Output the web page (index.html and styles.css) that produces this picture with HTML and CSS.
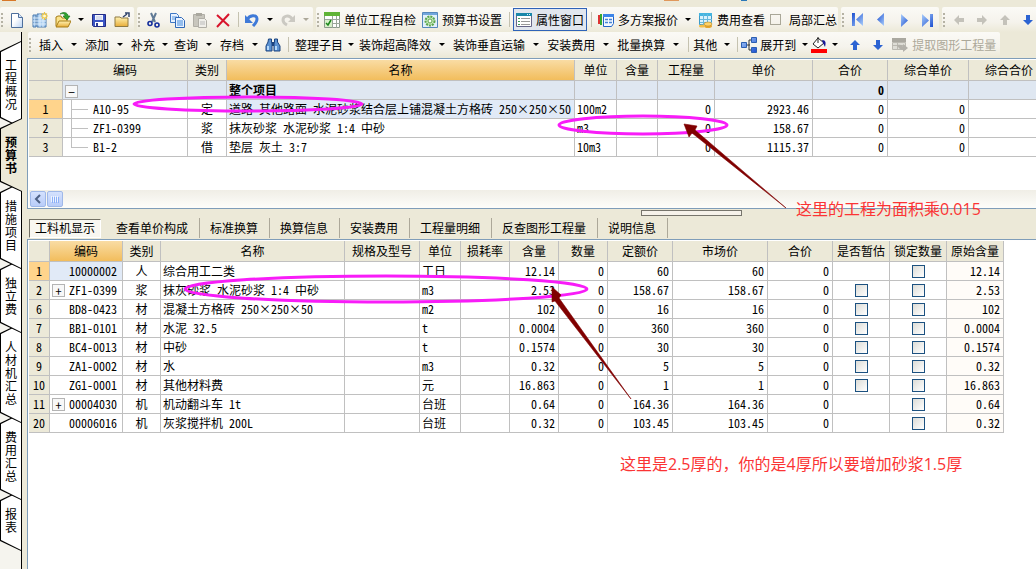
FILE: index.html
```html
<!DOCTYPE html>
<html lang="zh-CN">
<head>
<meta charset="utf-8">
<title>预算书</title>
<link rel="stylesheet" href="styles.css">
</head>
<body>
<svg class="defs" aria-hidden="true">
<defs>
<linearGradient id="blue" x1="0" y1="0" x2="1" y2="1"><stop offset="0" stop-color="#a9cdfb"/><stop offset="1" stop-color="#1c4fd0"/></linearGradient>
<linearGradient id="paper" x1="0" y1="0" x2="1" y2="1"><stop offset="0.4" stop-color="#fff"/><stop offset="1" stop-color="#b9d2f2"/></linearGradient>
<linearGradient id="gold" x1="0" y1="0" x2="0" y2="1"><stop offset="0" stop-color="#fff3b4"/><stop offset="1" stop-color="#e8ad38"/></linearGradient>
<symbol id="up" viewBox="0 0 16 16"><path d="M8 3l5 5h-3v5H6V8H3z"/></symbol>
<symbol id="next" viewBox="0 0 16 16"><path d="M5 2l7 6.500-7 6.500z"/></symbol>
<symbol id="last" viewBox="0 0 16 16"><path d="M3 2l7 6.500-7 6.500zM11 2h3v13h-3z"/></symbol>
</defs>
</svg>
<div class="app">
<div class="strip"></div>
<div class="toolbar">
  <div class="band">
    <i class="grip"></i>
    <button class="tool icon" aria-label="新建"><svg viewBox="0 0 16 16"><path d="M2.500 1.500h7l4 4v10h-11z" fill="url(#paper)" stroke="#4d6f9c"/><path d="M9.500 1.500v4h4" fill="#dbe8fa" stroke="#4d6f9c"/></svg></button>
    <button class="tool icon" aria-label="新建项目"><svg viewBox="0 0 16 16"><path d="M1 3h3v12H1zM5 2h9v13H5z" fill="#a9cdf0" stroke="#4a7ab0"/><path d="M1 6h13M1 9h13M1 12h13M8 2v13M11 2v13" stroke="#dcecfb"/><path d="M12.500 0v8M9 4h7M10 1.500l5 5M15 1.500l-5 5" stroke="#f5c637" stroke-width="1.200"/><circle cx="12.500" cy="4" r="1.500" fill="#fffbd0"/></svg></button>
    <button class="tool icon" aria-label="打开"><svg viewBox="0 0 16 16"><path d="M1 14V5l2-1h3l1 2h5v3" fill="#fbe38b" stroke="#a67c16"/><path d="M1 15l3-6h12l-3 6z" fill="url(#gold)" stroke="#a67c16"/><path d="M5 2c4-3 8-1 8 2h2l-3 4-4-4h2c0-2-2-3-5-2z" fill="#2fa32f" stroke="#126b16" stroke-width=".6"/></svg></button>
    <button class="drop" aria-label="打开选项"></button>
    <button class="tool icon" aria-label="保存"><svg viewBox="0 0 16 16"><path d="M1.500 2.500h13v12h-12l-1-1z" fill="#3b55c4" stroke="#232c86"/><path d="M4 3h8v5H4z" fill="#f3f5fc"/><path d="M5 5h6M5 7h6" stroke="#aab4d4" stroke-width=".7"/><path d="M4 10h8v4H4z" fill="#fff"/><path d="M5 11h2v3H5z" fill="#2b3a95"/></svg></button>
    <button class="tool icon" aria-label="关闭"><svg viewBox="0 0 16 16"><path d="M1 5h5l1 1h7v8.500H1z" fill="url(#gold)" stroke="#8f7a42"/><path d="M9 5l4-3M11 1h4v4" fill="none" stroke="#31456d" stroke-width="1.500"/></svg></button>
  </div>
  <div class="band">
    <i class="grip"></i>
    <button class="tool icon" aria-label="剪切"><svg viewBox="0 0 16 16"><path d="M5 1l4 9M10 1L6 10" stroke="#617b96" stroke-width="2"/><circle cx="4" cy="11.500" r="2" fill="none" stroke="#142e9c" stroke-width="1.600"/><circle cx="11" cy="13" r="2" fill="none" stroke="#142e9c" stroke-width="1.600"/></svg></button>
    <button class="tool icon" aria-label="复制"><svg viewBox="0 0 16 16"><path d="M1.500 1.500h6l2 2v7h-8z" fill="#e8f2ff" stroke="#3f78c4"/><path d="M3 5h5M3 7h5" stroke="#5a98de"/><path d="M6.500 5.500h6l3 3v7h-9z" fill="#eaf3ff" stroke="#2f68b8"/><path d="M8 9h6M8 11h6M8 13h6" stroke="#3f88dc"/></svg></button>
    <button class="tool icon" aria-label="粘贴" disabled><svg viewBox="0 0 16 16"><path d="M1.500 2.500h11v12h-11z" fill="#c8c6bd" stroke="#b0aea6"/><path d="M4 1h6v3H4z" fill="#aaa89f"/><path d="M6.500 6.500h6l2 2v7h-8z" fill="#f0efea" stroke="#b0aea6"/><path d="M8 10h5M8 12h5" stroke="#bbb"/></svg></button>
    <button class="tool icon" aria-label="删除"><svg viewBox="0 0 16 16"><path d="M2 3l12 11M14 2L2 15" stroke="#d8142c" stroke-width="2"/></svg></button>
    <i class="sep slim"></i>
    <button class="tool icon" aria-label="撤销"><svg viewBox="0 0 16 16"><path d="M3 8c2-5 10-6 10-1 0 3-2 5-4 7" fill="none" stroke="#3f7ad8" stroke-width="3"/><path d="M1 3v8h8z" fill="#3f7ad8"/></svg></button>
    <button class="drop" aria-label="撤销选项"></button>
    <button class="tool icon" aria-label="重做" disabled><svg viewBox="0 0 16 16"><path d="M12 7C9 2 3 4 3 8c0 3 2 4 4 5" fill="none" stroke="#cbc9c2" stroke-width="3"/><path d="M15 3v7H8z" fill="#cbc9c2"/></svg></button>
    <button class="drop" aria-label="重做选项" disabled></button>
  </div>
  <div class="band">
    <i class="grip"></i>
    <button class="tool"><svg viewBox="0 0 16 16"><path d="M.5.500h15v15H.5z" fill="#fff" stroke="#8b9a8b"/><path d="M0 0h16v4H0z" fill="#5fb336"/><path d="M1 7.500h15M1 11.500h15M8.500 4v12M12.500 4v12" stroke="#9aa79a"/><path d="M1 8h7v7H1z" fill="#d7f1c9"/><path d="M2 11l2 2 3-5" fill="none" stroke="#1b861b" stroke-width="1.500"/></svg>单位工程自检</button>
    <button class="tool"><svg viewBox="0 0 16 16"><path d="M.5.500h15v15H.5z" fill="#e2f0fb" stroke="#5587bb"/><path d="M1 1h14v2H1z" fill="#72a6dc"/><circle cx="8" cy="9" r="4.500" fill="#c7e7bc" stroke="#5aa64a" stroke-width="2" stroke-dasharray="2 1"/><circle cx="8" cy="9" r="2" fill="#fff" stroke="#5aa64a"/></svg>预算书设置</button>
    <i class="sep"></i>
    <button class="tool pressed" aria-pressed="true"><svg viewBox="0 0 16 16"><path d="M.5 1.500h15v13H.5z" fill="#fff" stroke="#668"/><path d="M0 1h16v3H0z" fill="#1987a9"/><path d="M11 2.500h4" stroke="#d9f4fb" stroke-dasharray="1 1"/><path d="M2 6.500h2M2 9.500h2M2 12.500h2" stroke="#3f9d58"/><path d="M5 6.500h9M5 9.500h9M5 12.500h9" stroke="#999"/></svg>属性窗口</button>
    <i class="sep"></i>
    <button class="tool"><svg viewBox="0 0 16 16"><path d="M1 3v9" stroke="#d33" stroke-width="2"/><path d="M3 2v11" stroke="#3a3" stroke-width="2"/><path d="M5.500 2.500h10v9l-2 3h-8z" fill="#f4f9ff" stroke="#2364c8"/><path d="M5 2h11v3H5z" fill="#3c85e8"/><path d="M7 7.500h3M11 7.500h3M7 10.500h3M11 10.500h3" stroke="#4684d6" stroke-width="1.500"/></svg>多方案报价</button>
    <button class="drop" aria-label="多方案报价选项"></button>
    <button class="tool"><svg viewBox="0 0 16 16"><path d="M2.500 1.500h12v11h-12z" fill="#d9f1fc" stroke="#3d9bc8"/><path d="M2 1h13v3H2z" fill="#45b5e0"/><path d="M3 7.500h12M3 10.500h12M6.500 2v11M10.500 2v11" stroke="#67b8dc"/><ellipse cx="11" cy="14" rx="4" ry="2" fill="#e6a72e"/><ellipse cx="11" cy="12" rx="4" ry="2" fill="#ffd369" stroke="#b37b17" stroke-width=".5"/><ellipse cx="5" cy="14" rx="3" ry="1.500" fill="#f2bd49"/></svg>费用查看</button>
    <label class="toggle"><input type="checkbox">局部汇总</label>
  </div>
  <div class="band">
    <i class="grip"></i>
    <button class="tool icon" aria-label="首条"><svg class="flip nav" viewBox="0 0 16 16"><use href="#last"/></svg></button>
    <button class="tool icon" aria-label="上一条"><svg class="flip nav" viewBox="0 0 16 16"><use href="#next"/></svg></button>
    <button class="tool icon" aria-label="下一条"><svg class="nav" viewBox="0 0 16 16"><use href="#next"/></svg></button>
    <button class="tool icon" aria-label="末条"><svg class="nav" viewBox="0 0 16 16"><use href="#last"/></svg></button>
  </div>
  <div class="band wide">
    <i class="grip"></i>
    <button class="tool icon" aria-label="左移" disabled><svg class="left" viewBox="0 0 16 16"><use href="#up"/></svg></button>
    <button class="tool icon" aria-label="右移" disabled><svg class="right" viewBox="0 0 16 16"><use href="#up"/></svg></button>
    <button class="tool icon" aria-label="上移" disabled><svg viewBox="0 0 16 16"><use href="#up"/></svg></button>
    <button class="tool icon" aria-label="下移"><svg class="down move" viewBox="0 0 16 16"><use href="#up"/></svg></button>
  </div>
</div>
<div class="body">
<nav class="rail">
  <button class="side"><span>工程概况</span></button>
  <button class="side current"><span>预算书</span></button>
  <button class="side"><span>措施项目</span></button>
  <button class="side"><span>独立费</span></button>
  <button class="side"><span>人材机汇总</span></button>
  <button class="side"><span>费用汇总</span></button>
  <button class="side"><span>报表</span></button>
</nav>
<main>
<div class="toolbar second">
  <div class="band">
    <i class="grip"></i>
    <button class="tool">插入</button><button class="drop roomy" aria-label="插入选项"></button>
    <button class="tool">添加</button><button class="drop roomy" aria-label="添加选项"></button>
    <button class="tool">补充</button><button class="drop" aria-label="补充选项"></button>
    <button class="tool">查询</button><button class="drop roomy" aria-label="查询选项"></button>
    <button class="tool">存档</button><button class="drop roomy" aria-label="存档选项"></button>
    <button class="tool find" aria-label="查找"><svg viewBox="0 0 16 16"><path d="M3.500 2h3v3l.5 2v7H1V9l2-4zM9.500 2h3v3l2.500 4v5H9V7l.5-2z" fill="#5b92d2" stroke="#1c4480"/><path d="M7 5h2v4H7z" fill="#1c4480"/><path d="M2 9h2v4H2zM10 9h2v4h-2z" fill="#b5d9fa"/></svg></button>
    <i class="sep"></i>
    <button class="tool">整理子目</button><button class="drop close" aria-label="整理子目选项"></button>
    <button class="tool">装饰超高降效</button><button class="drop roomy" aria-label="装饰超高降效选项"></button>
    <button class="tool">装饰垂直运输</button><button class="drop roomy" aria-label="装饰垂直运输选项"></button>
    <button class="tool">安装费用</button><button class="drop roomy" aria-label="安装费用选项"></button>
    <button class="tool">批量换算</button><button class="drop roomy" aria-label="批量换算选项"></button>
    <i class="sep slim"></i>
    <button class="tool">其他</button><button class="drop" aria-label="其他选项"></button>
    <i class="sep slim"></i>
    <button class="tool tight"><svg viewBox="0 0 16 16"><path d="M5 8h4M8 3v10M8 3h3M8 13h3" fill="none" stroke="#333"/><path d="M.5 5.500h5v5h-5zM10.500.500h5v5h-5zM10.500 10.500h5v5h-5z" fill="url(#blue)" stroke="#2c5eb0"/></svg>展开到</button><button class="drop" aria-label="展开选项"></button>
    <button class="tool fill" aria-label="填充颜色"><svg viewBox="0 0 16 16"><path d="M7 1l6 5-6 5-5-4z" fill="#fff" stroke="#222"/><path d="M7 0v6" stroke="#222"/><path d="M11 3c4 0 4 3 3 7l-2-4z" fill="#17179a"/><path d="M0 12h16v4H0z" fill="#f00"/></svg></button><button class="drop roomy" aria-label="颜色选项"></button>
    <button class="tool icon" aria-label="向上"><svg class="move" viewBox="0 0 16 16"><use href="#up"/></svg></button>
    <button class="tool icon" aria-label="向下"><svg class="down move" viewBox="0 0 16 16"><use href="#up"/></svg></button>
    <button class="tool" disabled><svg viewBox="0 0 16 16"><path d="M0 1h14v4H0z" fill="#aaa8a0"/><path d="M.5 5.500h13v7H.5zM1 8.500h12M5.500 5v7" fill="#deddd6" stroke="#bbb9b1"/><path d="M5 8c5-1 6 1 6 2V7l5 4-5 4v-2c-2 0-4-1-6-5z" fill="#b3b1aa"/></svg>提取图形工程量</button>
  </div>
</div>
<section class="pane upper">
<table class="grid budget">
<colgroup><col class="w34"><col class="w125"><col class="w39"><col class="w348"><col class="w42"><col class="w41"><col class="w57"><col class="w98"><col class="w75"><col class="w81"><col class="w81"></colgroup>
<thead><tr><th></th><th>编码</th><th>类别</th><th class="hot">名称</th><th>单位</th><th>含量</th><th>工程量</th><th>单价</th><th>合价</th><th>综合单价</th><th>综合合价</th></tr></thead>
<tbody>
<tr class="total"><th></th><td class="tree"><button class="node" aria-label="折叠">−</button></td><td></td><td>整个项目</td><td></td><td></td><td></td><td></td><td class="n">0</td><td></td><td></td></tr>
<tr><th class="on">1</th><td class="branch">A10-95</td><td class="c">定</td><td class="sel">道路 其他路面 水泥砂浆结合层上铺混凝土方格砖 250×250×50</td><td>100m2</td><td></td><td class="n">0</td><td class="n">2923.46</td><td class="n">0</td><td class="n">0</td><td></td></tr>
<tr><th>2</th><td class="branch">ZF1-0399</td><td class="c">浆</td><td>抹灰砂浆 水泥砂浆 1:4 中砂</td><td>m3</td><td></td><td class="n">0</td><td class="n">158.67</td><td class="n">0</td><td class="n">0</td><td></td></tr>
<tr><th>3</th><td class="branch end">B1-2</td><td class="c">借</td><td>垫层 灰土 3:7</td><td>10m3</td><td></td><td class="n">0</td><td class="n">1115.37</td><td class="n">0</td><td class="n">0</td><td></td></tr>
</tbody>
</table>
<div class="hscroll">
  <button class="sb" aria-label="向左滚动"><svg viewBox="0 0 14 14"><path d="M9 3L5 7l4 4" fill="none" stroke="#4d6185" stroke-width="2"/></svg></button>
  <button class="sb" aria-label="滑块"><svg viewBox="0 0 14 14"><path d="M3.500 4v6M5.500 4v6M7.500 4v6M9.500 4v6" stroke="#eef4fe"/><path d="M4.500 5v6M6.500 5v6M8.500 5v6M10.500 5v6" stroke="#8cb0f8"/></svg></button>
</div>
</section>
<div class="splitter"><i class="handle"></i></div>
<div class="tabs" role="tablist">
  <button class="tab active" role="tab" aria-selected="true">工料机显示</button>
  <button class="tab" role="tab">查看单价构成</button>
  <button class="tab" role="tab">标准换算</button>
  <button class="tab" role="tab">换算信息</button>
  <button class="tab" role="tab">安装费用</button>
  <button class="tab" role="tab">工程量明细</button>
  <button class="tab" role="tab">反查图形工程量</button>
  <button class="tab" role="tab">说明信息</button>
</div>
<section class="pane lower">
<table class="grid detail">
<colgroup><col class="w21"><col class="w73"><col class="w38"><col class="w184"><col class="w75"><col class="w41"><col class="w49"><col class="w49"><col class="w49"><col class="w65"><col class="w95"><col class="w65"><col class="w57"><col class="w57"><col class="w57"></colgroup>
<thead><tr><th></th><th class="hot">编码</th><th>类别</th><th>名称</th><th>规格及型号</th><th>单位</th><th>损耗率</th><th>含量</th><th>数量</th><th>定额价</th><th>市场价</th><th>合价</th><th>是否暂估</th><th>锁定数量</th><th>原始含量</th></tr></thead>
<tbody>
<tr><th class="on">1</th><td class="code sel">10000002</td><td class="c">人</td><td>综合用工二类</td><td></td><td>工日</td><td></td><td class="n">12.14</td><td class="n">0</td><td class="n">60</td><td class="n">60</td><td class="n">0</td><td></td><td class="c"><input type="checkbox" aria-label="锁定数量 1"></td><td class="n orig">12.14</td></tr>
<tr><th>2</th><td class="code"><button class="node" aria-label="展开">+</button>ZF1-0399</td><td class="c">浆</td><td>抹灰砂浆 水泥砂浆 1:4 中砂</td><td></td><td>m3</td><td></td><td class="n">2.53</td><td class="n">0</td><td class="n">158.67</td><td class="n">158.67</td><td class="n">0</td><td class="c"><input type="checkbox" aria-label="是否暂估 2"></td><td class="c"><input type="checkbox" aria-label="锁定数量 2"></td><td class="n orig">2.53</td></tr>
<tr><th>6</th><td class="code">BD8-0423</td><td class="c">材</td><td>混凝土方格砖 250×250×50</td><td></td><td>m2</td><td></td><td class="n">102</td><td class="n">0</td><td class="n">16</td><td class="n">16</td><td class="n">0</td><td class="c"><input type="checkbox" aria-label="是否暂估 6"></td><td class="c"><input type="checkbox" aria-label="锁定数量 6"></td><td class="n orig">102</td></tr>
<tr><th>7</th><td class="code">BB1-0101</td><td class="c">材</td><td>水泥 32.5</td><td></td><td>t</td><td></td><td class="n">0.0004</td><td class="n">0</td><td class="n">360</td><td class="n">360</td><td class="n">0</td><td class="c"><input type="checkbox" aria-label="是否暂估 7"></td><td class="c"><input type="checkbox" aria-label="锁定数量 7"></td><td class="n orig">0.0004</td></tr>
<tr><th>8</th><td class="code">BC4-0013</td><td class="c">材</td><td>中砂</td><td></td><td>t</td><td></td><td class="n">0.1574</td><td class="n">0</td><td class="n">30</td><td class="n">30</td><td class="n">0</td><td class="c"><input type="checkbox" aria-label="是否暂估 8"></td><td class="c"><input type="checkbox" aria-label="锁定数量 8"></td><td class="n orig">0.1574</td></tr>
<tr><th>9</th><td class="code">ZA1-0002</td><td class="c">材</td><td>水</td><td></td><td>m3</td><td></td><td class="n">0.32</td><td class="n">0</td><td class="n">5</td><td class="n">5</td><td class="n">0</td><td class="c"><input type="checkbox" aria-label="是否暂估 9"></td><td class="c"><input type="checkbox" aria-label="锁定数量 9"></td><td class="n orig">0.32</td></tr>
<tr><th>10</th><td class="code">ZG1-0001</td><td class="c">材</td><td>其他材料费</td><td></td><td>元</td><td></td><td class="n">16.863</td><td class="n">0</td><td class="n">1</td><td class="n">1</td><td class="n">0</td><td class="c"><input type="checkbox" aria-label="是否暂估 10"></td><td class="c"><input type="checkbox" aria-label="锁定数量 10"></td><td class="n orig">16.863</td></tr>
<tr><th>11</th><td class="code"><button class="node" aria-label="展开">+</button>00004030</td><td class="c">机</td><td>机动翻斗车 1t</td><td></td><td>台班</td><td></td><td class="n">0.64</td><td class="n">0</td><td class="n">164.36</td><td class="n">164.36</td><td class="n">0</td><td></td><td class="c"><input type="checkbox" aria-label="锁定数量 11"></td><td class="n orig">0.64</td></tr>
<tr><th>20</th><td class="code">00006016</td><td class="c">机</td><td>灰浆搅拌机 200L</td><td></td><td>台班</td><td></td><td class="n">0.32</td><td class="n">0</td><td class="n">103.45</td><td class="n">103.45</td><td class="n">0</td><td></td><td class="c"><input type="checkbox" aria-label="锁定数量 20"></td><td class="n orig">0.32</td></tr>
</tbody>
</table>
</section>
</main>
</div>
<svg class="marks" width="1036" height="569" viewBox="0 0 1036 569" aria-hidden="true">
  <g fill="none" stroke="#f81cf8" stroke-width="3">
    <ellipse cx="248" cy="104" rx="114" ry="7"/>
    <ellipse cx="643" cy="125" rx="84" ry="9"/>
    <ellipse cx="386" cy="289" rx="201" ry="13"/>
  </g>
  <g fill="#800000" stroke="#800000" stroke-width=".6">
    <path d="M684 124l13 2-2 4 91 78-94-75-3 4z"/>
    <path d="M552 287l9 8-2 3 72 101-76-98-3 1z"/>
  </g>
</svg>
<p class="note first">这里的工程为面积乘0.015</p>
<p class="note second-note">这里是2.5厚的，你的是4厚所以要增加砂浆1.5厚</p>
</div>
</body>
</html>
```
FILE: styles.css
```css
* { box-sizing: border-box; }
body {
  margin: 0;
  background: #ece9d8;
  color: #000;
  font-family: "Noto Sans Mono CJK SC", "Noto Sans CJK SC", monospace;
  font-size: 12px;
  line-height: 16px;
}
button, input { font: inherit; color: inherit; margin: 0; }
button { border: 0; padding: 0; background: none; white-space: nowrap; }
.defs { position: absolute; width: 0; height: 0; }
.app { position: relative; display: flex; flex-direction: column; min-height: 100vh; overflow: hidden; }
.strip {
  height: 7px;
  background:
    linear-gradient(#d87828, #d87828) 2px 0 / 14px 1px no-repeat,
    linear-gradient(#e0985c, #e0985c) 664px 0 / 15px 1px no-repeat,
    linear-gradient(#2a78b8, #2a78b8) 741px 0 / 6px 1px no-repeat,
    #ece9d8;
}

/* toolbars */
.toolbar { display: flex; gap: 3px; height: 25px; }
.band {
  display: flex;
  flex: none;
  align-items: center;
  height: 25px;
  padding-right: 1px;
  border-radius: 2px;
  background: linear-gradient(#fbfaf6, #f5f3ec 60%, #ece9d8);
}
.wide { flex: 1 0 auto; }
.grip {
  flex: none;
  width: 5px;
  height: 16px;
  background: radial-gradient(circle at 2px 2px, #b5b2a4 1px, transparent 1px) 0 0 / 5px 4px no-repeat;
  background-repeat: no-repeat repeat;
}
.tool { display: flex; flex: none; align-items: center; gap: 4px; height: 23px; padding: 0 3px; }
.tool svg { flex: none; width: 16px; height: 16px; }
.icon { width: 23px; justify-content: center; }
.find { padding: 0 3px 0 2px; }
.fill { padding: 0; }
.tight { padding: 0 2px; gap: 3px; }
.pressed { border: 1px solid #2f63b8; background: #e1e6ee; padding: 0 2px; }
.tool:disabled { color: #aca899; fill: #c4c2ba; }
.nav { fill: url(#blue); }
.move { fill: #2c63d2; }
.flip { transform: rotate(180deg); }
.down { transform: rotate(180deg); }
.left { transform: rotate(270deg); }
.right { transform: rotate(90deg); }
.drop { display: flex; flex: none; justify-content: center; width: 13px; }
.drop::before { content: ""; border: 3px solid transparent; border-top-color: #000; border-bottom: 0; }
.drop:disabled::before { border-top-color: #aca899; }
.roomy { width: 16px; }
.close { width: 10px; }
.sep { flex: none; width: 8px; height: 15px; background: linear-gradient(#c5c2b0, #c5c2b0) 4px 0 / 1px 15px no-repeat; }
.slim { width: 6px; }
.toggle { display: flex; align-items: center; gap: 8px; padding-left: 2px; }
.toggle input { appearance: none; width: 11px; height: 11px; border: 1px solid #a9a798; }
.second { height: 26px; padding-left: 1px; }
.second .grip { width: 8px; }

/* side rail */
.body { display: flex; flex: 1; }
.rail {
  display: flex;
  flex: none;
  flex-direction: column;
  width: 22px;
  padding-top: 9px;
  background: #f5f4ee;
  border-right: 1px solid #000;
}
.side {
  position: relative;
  flex: none;
  padding: 17px 3px 18px 5px;
  margin-bottom: -10px;
  background: #000;
  clip-path: polygon(0 10px, 100% 0, 100% 100%, 0 calc(100% - 10px));
  white-space: normal;
  line-height: 13px;
}
.side::before {
  content: "";
  position: absolute;
  inset: 1px 0 1px 1px;
  background: #fff;
  clip-path: polygon(0 10px, 100% 0, 100% 100%, 0 calc(100% - 10px));
}
.side span { position: relative; display: block; width: 12px; word-break: break-all; }
.side:nth-child(1) { z-index: 7; }
.side:nth-child(3) { z-index: 6; }
.side:nth-child(4) { z-index: 5; }
.side:nth-child(5) { z-index: 4; }
.side:nth-child(6) { z-index: 3; }
.side:nth-child(7) { z-index: 2; }
.side.current { z-index: 8; margin-right: -1px; font-weight: bold; }
.side.current::before { background: #ece9d8; }

main { display: flex; flex: 1; flex-direction: column; min-width: 0; padding-left: 5px; }
.pane { overflow: hidden; border: solid #7f9db9; border-width: 1px 0 1px 1px; background: #fff; padding: 1px 0 0 1px; }
.upper { display: flex; flex-direction: column; min-height: 151px; }
.lower { flex: 1; border-bottom: 0; }

/* grids */
.grid { table-layout: fixed; border-collapse: separate; border-spacing: 0; }
.budget { width: 1021px; }
.detail { width: 975px; }
.grid th, .grid td {
  height: 19px;
  padding: 0 2px;
  border: solid #c0c0c0;
  border-width: 0 1px 1px 0;
  font-weight: normal;
  text-align: left;
  white-space: nowrap;
  overflow: hidden;
}
.grid th { background: #ece9d8; text-align: center; padding: 0; }
.grid thead th { height: 21px; }
.grid .hot { background: linear-gradient(#f9dca4, #f2bd5c); }
.grid .on { background: #ffd48c; }
.grid .sel { background: #e1eaf7; }
.grid .total td { background: #dfe7f1; font-weight: bold; }
.grid .c { text-align: center; }
.grid .n { text-align: right; padding-right: 3px; }
.grid .orig { background: #fffcf8; }
.node {
  display: inline-flex;
  align-items: center;
  justify-content: center;
  width: 13px;
  height: 13px;
  border: 1px solid #b4b4b4;
  background: #f8f8f8;
  font-weight: normal;
  line-height: 11px;
  vertical-align: middle;
}
.detail .code { text-align: right; padding-right: 5px; }
.detail .code .node { float: left; margin-top: 2px; }
.grid .branch {
  padding-left: 30px;
  background:
    linear-gradient(#c0c0c0, #c0c0c0) 8px 0 / 1px 100% no-repeat,
    linear-gradient(#c0c0c0, #c0c0c0) 8px 9px / 17px 1px no-repeat;
}
.grid .end { background-size: 1px 10px, 17px 1px; }
.detail input {
  appearance: none;
  display: block;
  width: 13px;
  height: 13px;
  margin: 1px auto 0;
  border: 1px solid #1c5180;
  background: linear-gradient(135deg, #dcdcd7, #fff);
}
.w21 { width: 21px; } .w34 { width: 34px; } .w38 { width: 38px; } .w39 { width: 39px; }
.w41 { width: 41px; } .w42 { width: 42px; } .w49 { width: 49px; } .w57 { width: 57px; }
.w65 { width: 65px; } .w73 { width: 73px; } .w75 { width: 75px; } .w81 { width: 81px; }
.w95 { width: 95px; } .w98 { width: 98px; } .w125 { width: 125px; } .w184 { width: 184px; }
.w348 { width: 348px; }

.hscroll {
  display: flex;
  gap: 1px;
  height: 18px;
  margin-top: auto;
  padding: 1px;
  background: linear-gradient(#f0eee6, #fdfdfa);
}
.sb {
  width: 16px;
  height: 16px;
  border: 1px solid #9fb8e8;
  border-radius: 2px;
  background: linear-gradient(#d4e1fd, #b9cdf9);
}
.sb svg { display: block; width: 14px; height: 14px; }

.splitter { display: flex; justify-content: center; height: 8px; padding-top: 1px; }
.handle { width: 101px; height: 6px; margin-left: 320px; border: 1px solid #77756c; background: #f6f2ea; }

/* detail tabs */
.tabs { display: flex; align-items: center; height: 22px; padding-left: 2px; }
.tab { height: 20px; padding: 0 11px 0 10px; border-right: 1px solid #aca899; }
.tab.active {
  height: 19px;
  margin-right: 5px;
  padding: 0 5px;
  border: 1px solid #fff;
  border-top-color: #716f64;
  border-left-color: #716f64;
  background: #f8f7f1;
}

/* annotations */
.marks { position: absolute; left: 0; top: 0; pointer-events: none; }
.note {
  position: absolute;
  margin: 0;
  color: #fb3434;
  font-family: "Open Sans", "Noto Sans CJK SC", sans-serif;
  font-size: 16px;
  line-height: 20px;
  white-space: nowrap;
}
.first { left: 796px; top: 199px; }
.second-note { left: 620px; top: 454px; }
```
